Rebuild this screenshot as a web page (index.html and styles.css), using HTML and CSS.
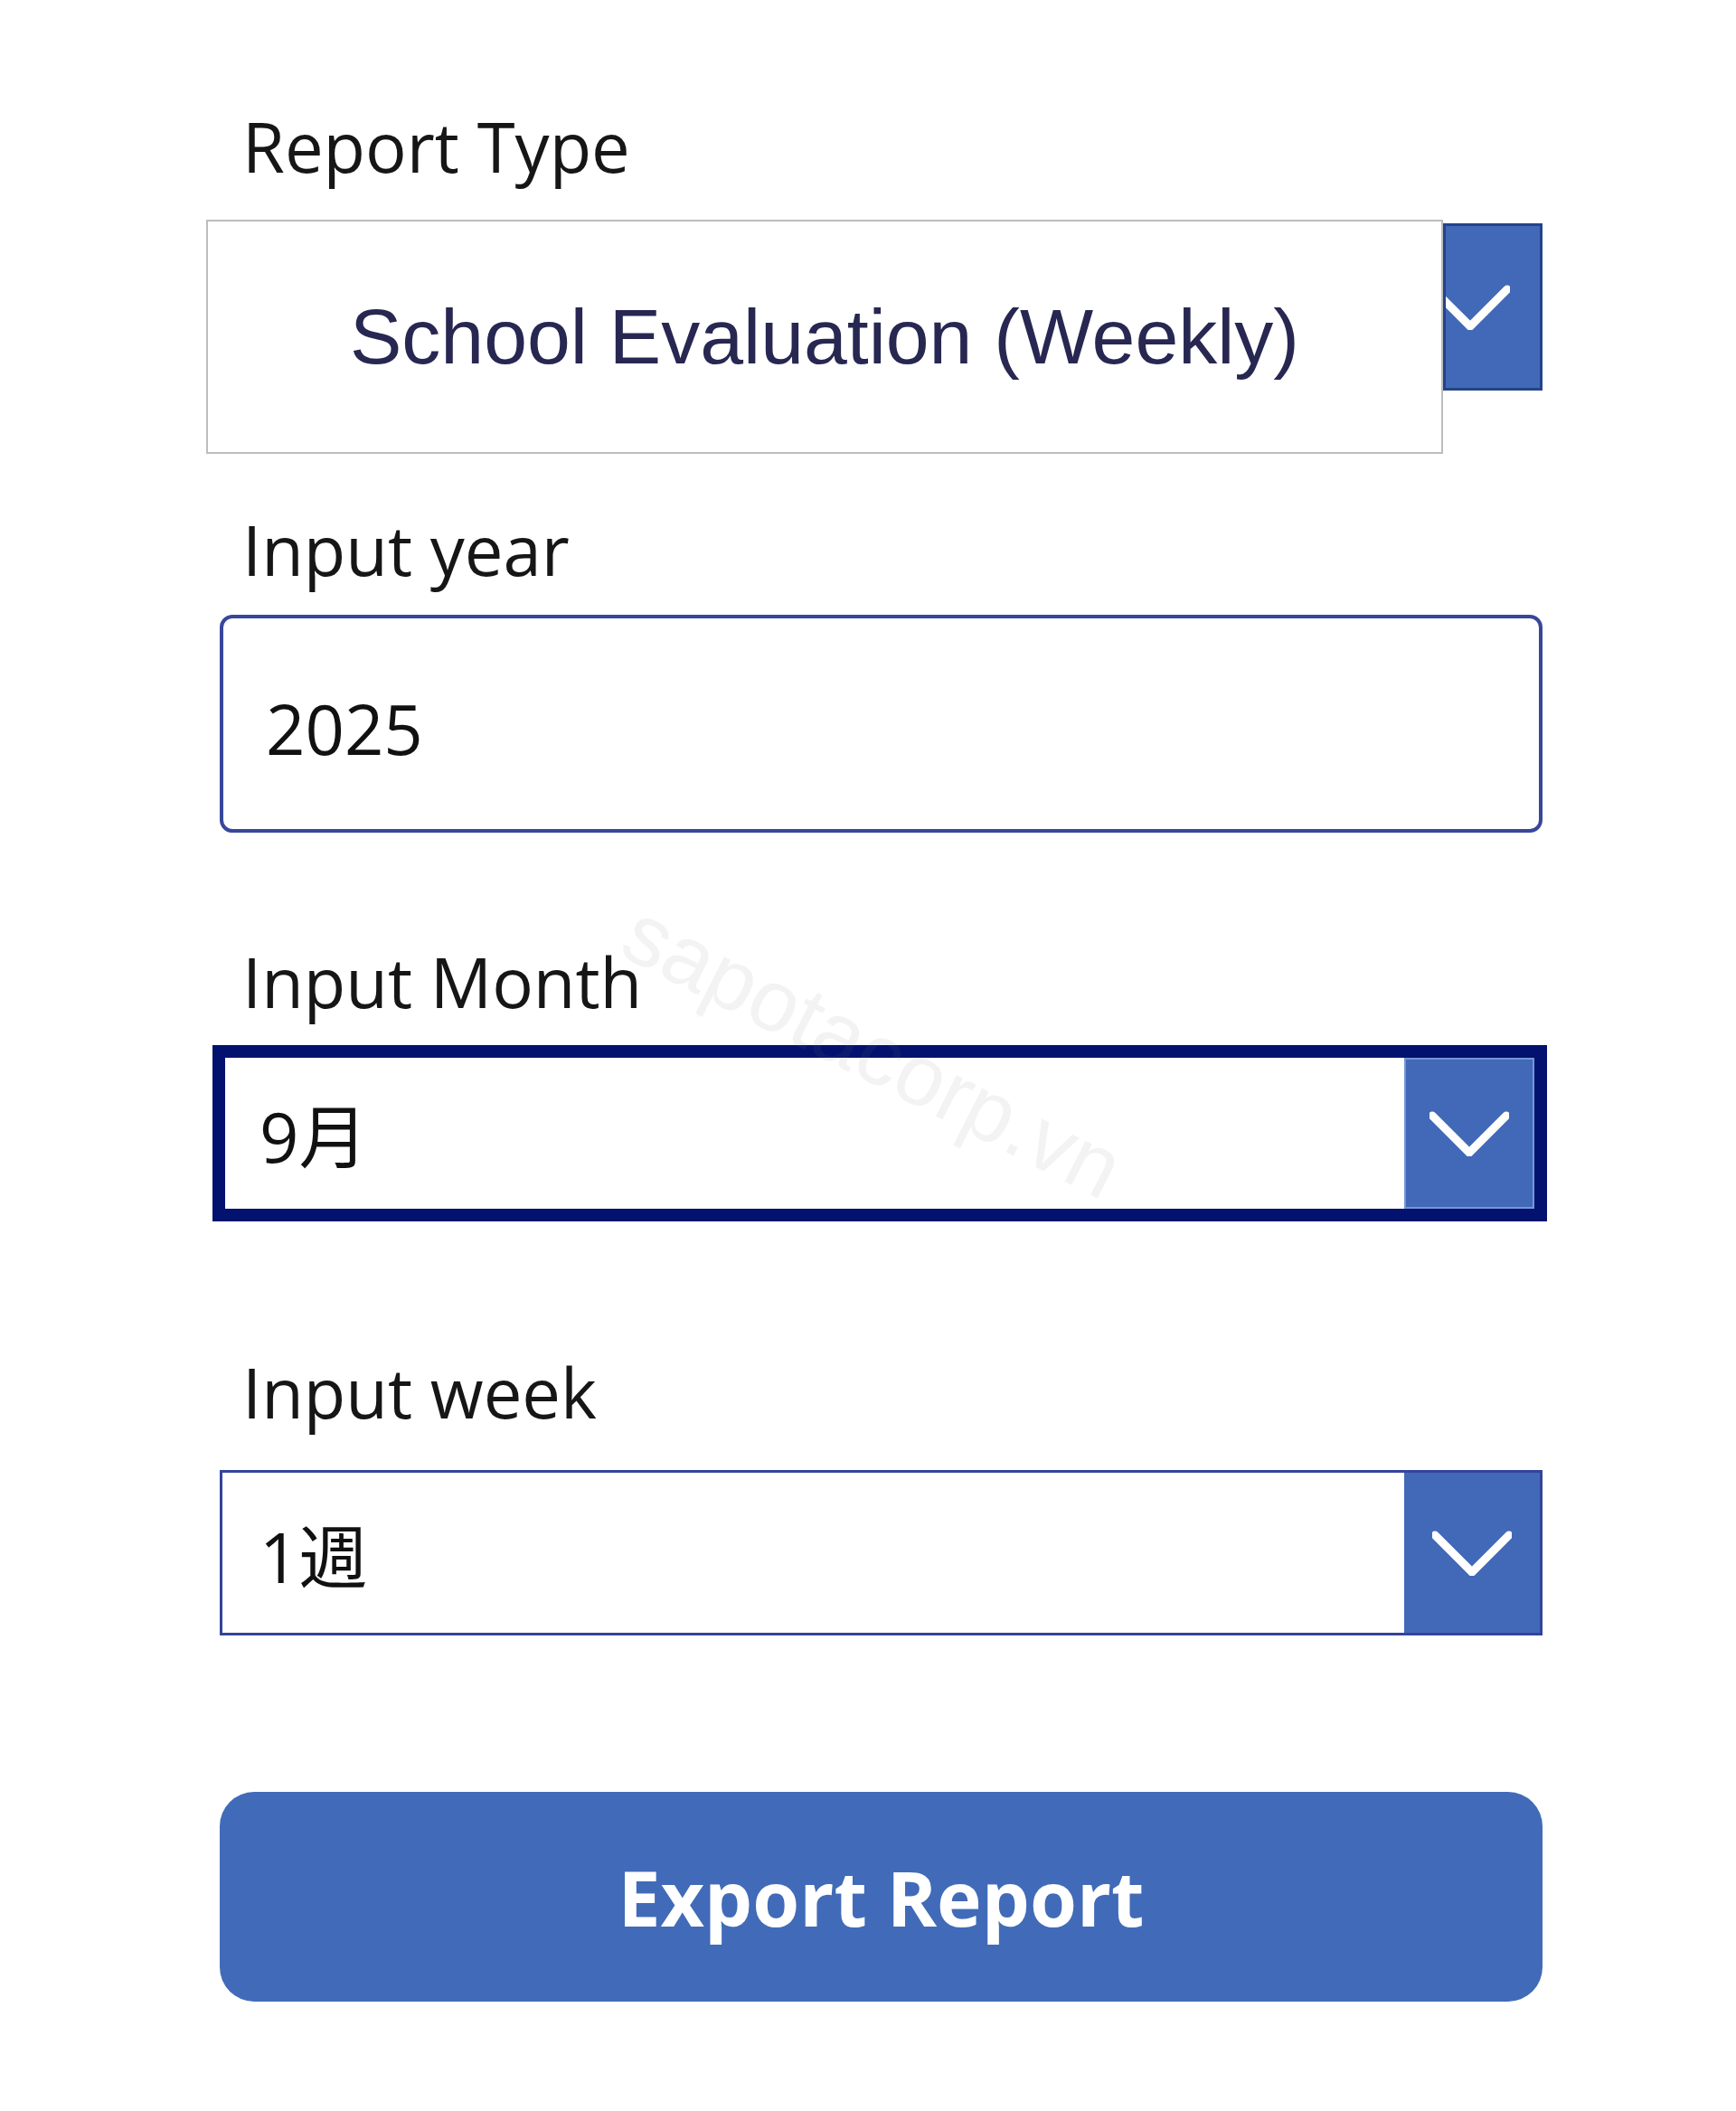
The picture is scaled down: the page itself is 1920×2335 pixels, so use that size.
FILE: index.html
```html
<!DOCTYPE html>
<html lang="en">
<head>
<meta charset="utf-8">
<title>Export Report</title>
<link rel="stylesheet" href="styles.css">
</head>
<body>
<div class="page">
  <div class="form">
    <div class="label label-type">Report Type</div>
    <div class="type-select">
      <div class="type-value">School Evaluation (Weekly)</div>
      <div class="type-btn">
        <svg class="chev chev-type" width="88" height="50" viewBox="0 0 88 50"><polyline points="3,5 44,46 85,5" /></svg>
      </div>
    </div>

    <div class="label label-year">Input year</div>
    <div class="year-input">2025</div>

    <div class="label label-month">Input Month</div>
    <div class="month-select">
      <div class="month-value">9月</div>
      <div class="month-btn">
        <svg class="chev" width="88" height="50" viewBox="0 0 88 50"><polyline points="3,5 44,46 85,5" /></svg>
      </div>
    </div>

    <div class="label label-week">Input week</div>
    <div class="week-select">
      <div class="week-value">1週</div>
      <div class="week-btn">
        <svg class="chev" width="88" height="50" viewBox="0 0 88 50"><polyline points="3,5 44,46 85,5" /></svg>
      </div>
    </div>

    <div class="export-btn">Export Report</div>
  </div>
  <div class="watermark">sapotacorp.vn</div>
</div>
</body>
</html>
```

FILE: styles.css
```css
html, body {
  margin: 0;
  padding: 0;
  background: #ffffff;
}

.page {
  position: relative;
  width: 1920px;
  height: 2335px;
  background: #ffffff;
  overflow: hidden;
  font-family: "Open Sans", "Noto Sans CJK JP", sans-serif;
}

.form {
  display: flex;
  flex-direction: column;
  align-items: flex-start;
  margin-left: 228px;
  padding-top: 112px;
  width: 1483px;
}

.label {
  font-family: "Open Sans", sans-serif;
  font-size: 76px;
  line-height: 100px;
  font-weight: 400;
  color: #161616;
  margin-left: 40px;
  white-space: nowrap;
}

.label-type { margin-bottom: 31px; }
.label-year { margin-top: 56px; margin-bottom: 22px; }
.label-month { margin-top: 115px; margin-bottom: 20px; }
.label-week { margin-top: 139px; margin-bottom: 36px; }

/* Report type dropdown */
.type-select {
  display: flex;
  align-items: flex-start;
}

.type-value {
  width: 1368px;
  height: 259px;
  box-sizing: border-box;
  border: 2px solid #bdbdbd;
  background: #ffffff;
  display: flex;
  align-items: center;
  justify-content: center;
  font-family: "Liberation Sans", Arial, sans-serif;
  font-size: 86px;
  color: #272752;
  white-space: nowrap;
}

.type-btn {
  width: 110px;
  height: 185px;
  margin-top: 4px;
  box-sizing: border-box;
  background: #4169b8;
  border: 3px solid #24438a;
  overflow: hidden;
  display: flex;
  align-items: center;
}

.chev polyline {
  fill: none;
  stroke: #ffffff;
  stroke-width: 9;
  stroke-linecap: round;
  stroke-linejoin: miter;
}

.chev-type {
  margin-left: -17px;
  flex: none;
}

/* Year input */
.year-input {
  margin-left: 15px;
  width: 1463px;
  height: 241px;
  box-sizing: border-box;
  border: 4px solid #38479a;
  border-radius: 14px;
  padding: 72px 0 0 47px;
  font-size: 76px;
  line-height: 100px;
  color: #111111;
}

/* Month dropdown (focused) */
.month-select {
  margin-left: 7px;
  width: 1476px;
  height: 195px;
  box-sizing: border-box;
  border: 14px solid #03126e;
  display: flex;
}

.month-value {
  flex: 1;
  padding: 37px 0 0 38px;
  font-size: 76px;
  line-height: 100px;
  color: #111111;
}

.month-btn {
  width: 144px;
  box-sizing: border-box;
  background: #4169b8;
  border: 2px solid #7597d6;
  display: flex;
  align-items: center;
  justify-content: center;
}

/* Week dropdown */
.week-select {
  margin-left: 15px;
  width: 1463px;
  height: 183px;
  box-sizing: border-box;
  border: 3px solid #34449a;
  display: flex;
}

.week-value {
  flex: 1;
  padding: 43px 0 0 41px;
  font-size: 76px;
  line-height: 100px;
  color: #111111;
}

.week-btn {
  width: 150px;
  background: #4169b8;
  display: flex;
  align-items: center;
  justify-content: center;
}

/* Export button */
.export-btn {
  margin-top: 173px;
  margin-left: 15px;
  width: 1463px;
  height: 232px;
  border-radius: 38px;
  background: #416bb8;
  color: #ffffff;
  font-size: 84px;
  font-weight: 700;
  display: flex;
  align-items: center;
  justify-content: center;
  white-space: nowrap;
}

/* Watermark overlay */
.watermark {
  position: absolute;
  left: 664px;
  top: 1112px;
  font-family: "Liberation Sans", Arial, sans-serif;
  font-size: 96px;
  line-height: 100px;
  color: rgba(120, 120, 120, 0.09);
  transform: rotate(27deg);
  transform-origin: center;
  white-space: nowrap;
  pointer-events: none;
}
```
